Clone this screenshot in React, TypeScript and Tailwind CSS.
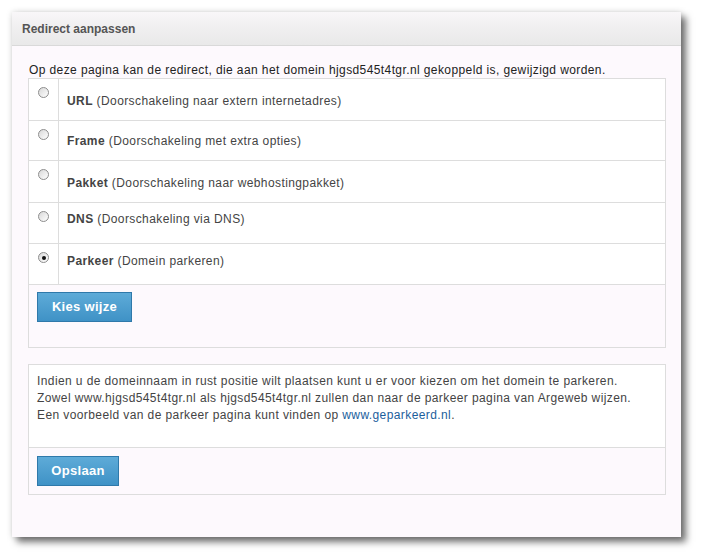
import React from "react";

const rows = [
  { label: "URL", desc: "(Doorschakeling naar extern internetadres)", h: "h-[42px]", tp: "pt-[14px]", checked: false },
  { label: "Frame", desc: "(Doorschakeling met extra opties)", h: "h-[40px]", tp: "pt-[12px]", checked: false },
  { label: "Pakket", desc: "(Doorschakeling naar webhostingpakket)", h: "h-[42px]", tp: "pt-[14px]", checked: false },
  { label: "DNS", desc: "(Doorschakeling via DNS)", h: "h-[41px]", tp: "pt-[8px]", checked: false },
  { label: "Parkeer", desc: "(Domein parkeren)", h: "h-[41px]", tp: "pt-[9px]", checked: true },
];

function Radio({ checked }: { checked: boolean }) {
  return (
    <span className="flex h-[11px] w-[11px] items-center justify-center rounded-full border border-[#8d8d8d] bg-[linear-gradient(135deg,#d8d8d8,#ffffff)]">
      {checked && <span className="h-[4px] w-[4px] rounded-full bg-[#111]" />}
    </span>
  );
}

function Btn({ children, w }: { children: React.ReactNode; w: string }) {
  return (
    <button
      className={`${w} h-[30px] border border-[#2f79aa] bg-[linear-gradient(#5eabd8,#3f92c6)] text-[13px] font-bold tracking-[0.3px] text-white`}
      style={{ fontFamily: "'Liberation Sans', Arial, sans-serif" }}
    >
      {children}
    </button>
  );
}

export default function App() {
  return (
    <div
      className="min-h-[557px] w-[702px] bg-white pl-[12px] pt-[12px]"
      style={{ fontFamily: "'Liberation Sans', Arial, sans-serif" }}
    >
      <div className="flex h-[525px] w-[669px] flex-col bg-[#fdf9fd] shadow-[5px_5px_7px_rgba(0,0,0,0.55),0_0_6px_rgba(0,0,0,0.15)]">
        <div className="flex h-[34px] items-center border-b border-[#d9d9d9] bg-[linear-gradient(#f9f7f9,#f1f0f1_40%,#e9e9e9)] pl-[10px] text-[12px] font-bold text-[#555]">
          Redirect aanpassen
        </div>
        <div className="flex flex-col pl-[16px] tracking-[0.4px]">
          <div className="pl-[1px] pt-[17px] text-[12px] leading-[15px] text-[#222]">
            Op deze pagina kan de redirect, die aan het domein hjgsd545t4tgr.nl gekoppeld is, gewijzigd worden.
          </div>
          <div className="w-[638px] border border-[#dddddd]">
            {rows.map((r) => (
              <div key={r.label} className={`flex ${r.h} border-b border-[#dddddd] bg-white`}>
                <div className="flex w-[30px] justify-center border-r border-[#dddddd] pt-[8px]">
                  <Radio checked={r.checked} />
                </div>
                <div className={`${r.tp} pl-[8px] text-[12px] leading-[16px] text-[#444]`}>
                  <span className="font-bold">{r.label}</span> {r.desc}
                </div>
              </div>
            ))}
            <div className="h-[62px] pl-[8px] pt-[7px]">
              <Btn w="w-[95px]">Kies wijze</Btn>
            </div>
          </div>
          <div className="mt-[16px] w-[638px] border border-[#dddddd]">
            <div className="h-[83px] border-b border-[#dddddd] bg-white pl-[8px] pt-[8px] text-[12px] leading-[17px] text-[#444]">
              <div>Indien u de domeinnaam in rust positie wilt plaatsen kunt u er voor kiezen om het domein te parkeren.</div>
              <div>Zowel www.hjgsd545t4tgr.nl als hjgsd545t4tgr.nl zullen dan naar de parkeer pagina van Argeweb wijzen.</div>
              <div>
                Een voorbeeld van de parkeer pagina kunt vinden op <span className="text-[#1b5e9c]">www.geparkeerd.nl</span>.
              </div>
            </div>
            <div className="h-[46px] pl-[8px] pt-[8px]">
              <Btn w="w-[82px]">Opslaan</Btn>
            </div>
          </div>
        </div>
      </div>
    </div>
  );
}
